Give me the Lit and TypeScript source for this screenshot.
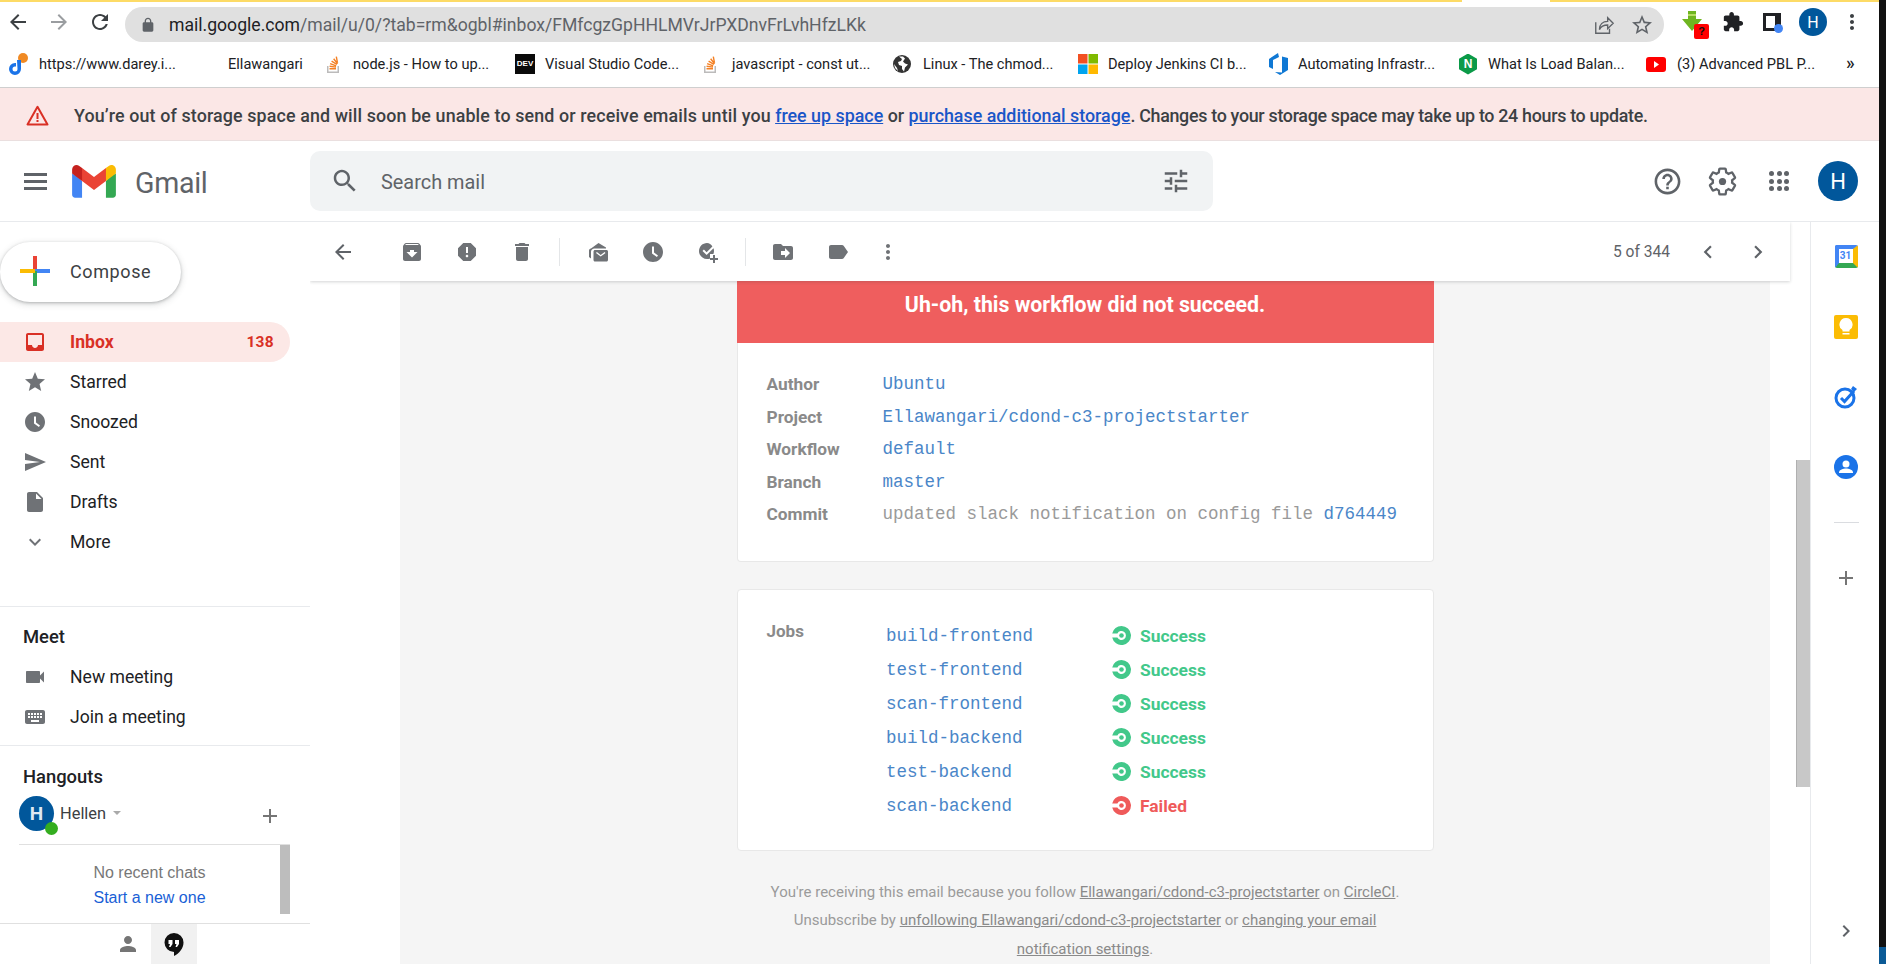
import { LitElement, html, css } from "lit";
import { customElement } from "lit/decorators.js";

const P = {
  archive: "M20.54 5.23l-1.39-1.68C18.88 3.21 18.47 3 18 3H6c-.47 0-.88.21-1.16.55L3.46 5.23C3.17 5.57 3 6.02 3 6.5V19c0 1.1.9 2 2 2h14c1.1 0 2-.9 2-2V6.5c0-.48-.17-.93-.46-1.27zM12 17.5L6.5 12H10v-2h4v2h3.5L12 17.5zM5.12 5l.81-1h12l.94 1H5.12z",
  report: "M15.73 3H8.27L3 8.27v7.46L8.27 21h7.46L21 15.73V8.27L15.73 3zM12 17.3c-.72 0-1.3-.58-1.3-1.3 0-.72.58-1.3 1.3-1.3.72 0 1.3.58 1.3 1.3 0 .72-.58 1.3-1.3 1.3zm1-4.3h-2V7h2v6z",
  trash: "M6 19c0 1.1.9 2 2 2h8c1.1 0 2-.9 2-2V7H6v12zM19 4h-3.5l-1-1h-5l-1 1H5v2h14V4z",
  unread: "M5 8.6L12.5 3 20 7.4 20 8.4H8.5C6.6 8.4 5 9.9 5 11.8V18.5L3 17V10.4C3 9.6 3.8 9 5 8.6zM9 10h11.5c.8 0 1.5.7 1.5 1.5V20c0 .8-.7 1.5-1.5 1.5H9c-.8 0-1.5-.7-1.5-1.5v-8.5C7.5 10.7 8.2 10 9 10zm1 3l4.7 3.6L19.5 13l-.9-1-3.9 2.9L10.9 12z",
  clock: "M12 2C6.5 2 2 6.5 2 12s4.5 10 10 10 10-4.5 10-10S17.5 2 12 2zm3.9 15.1L11 13.5V6.5h2v6l4 2.9z",
  task: "M11 3C6.6 3 3 6.6 3 11s3.6 8 8 8c1.1 0 2.1-.2 3-.6V14h3.4c.4-.9.6-1.9.6-3 0-1-.2-2-.5-2.8l-6.9 6.9-4.1-4.1 1.4-1.4 2.7 2.7 5.8-5.8C15.2 4.2 13.2 3 11 3zM17 15v3h-3v2h3v3h2v-3h3v-2h-3v-3z",
  move: "M20 6h-8l-2-2H4c-1.1 0-1.99.9-1.99 2L2 18c0 1.1.9 2 2 2h16c1.1 0 2-.9 2-2V8c0-1.1-.9-2-2-2zm-6 12v-3h-4v-4h4V8l5 5-5 5z",
  label: "M17.63 5.84C17.27 5.33 16.67 5 16 5L5 5.01C3.9 5.01 3 5.9 3 7v10c0 1.1.9 1.99 2 1.99L16 19c.67 0 1.27-.33 1.63-.84L22 12l-4.37-6.16z",
  more: "M12 8c1.1 0 2-.9 2-2s-.9-2-2-2-2 .9-2 2 .9 2 2 2zm0 2c-1.1 0-2 .9-2 2s.9 2 2 2 2-.9 2-2-.9-2-2-2zm0 6c-1.1 0-2 .9-2 2s.9 2 2 2 2-.9 2-2-.9-2-2-2z",
  back: "M20 11H7.83l5.59-5.59L12 4l-8 8 8 8 1.41-1.41L7.83 13H20v-2z",
  forward: "M4 13h12.17l-5.59 5.59L12 20l8-8-8-8-1.41 1.41L16.17 11H4v2z",
  reload: "M17.65 6.35C16.2 4.9 14.21 4 12 4c-4.42 0-7.99 3.58-7.99 8s3.57 8 7.99 8c3.73 0 6.84-2.55 7.73-6h-2.08c-.82 2.33-3.04 4-5.65 4-3.31 0-6-2.69-6-6s2.69-6 6-6c1.66 0 3.14.69 4.22 1.78L13 11h7V4l-2.35 2.35z",
  lock: "M18 8h-1V6c0-2.76-2.24-5-5-5S7 3.24 7 6v2H6c-1.1 0-2 .9-2 2v10c0 1.1.9 2 2 2h12c1.1 0 2-.9 2-2V10c0-1.1-.9-2-2-2zM9 6c0-1.66 1.34-3 3-3s3 1.34 3 3v2H9V6z",
  star: "M12 17.27L18.18 21l-1.64-7.03L22 9.24l-7.19-.61L12 2 9.19 8.63 2 9.24l5.46 4.73L5.82 21z",
  starLine: "M22 9.24l-7.19-.62L12 2 9.19 8.63 2 9.24l5.46 4.73L5.82 21 12 17.27 18.18 21l-1.63-7.03L22 9.24zM12 15.4l-3.76 2.27 1-4.28-3.32-2.88 4.38-.38L12 6.1l1.71 4.04 4.38.38-3.32 2.88 1 4.28L12 15.4z",
  puzzle: "M20.5 11H19V7c0-1.1-.9-2-2-2h-4V3.5C13 2.12 11.88 1 10.5 1S8 2.12 8 3.5V5H4c-1.1 0-1.99.9-1.99 2v3.8H3.5c1.49 0 2.7 1.21 2.7 2.7s-1.21 2.7-2.7 2.7H2V20c0 1.1.9 2 2 2h3.8v-1.5c0-1.49 1.21-2.7 2.7-2.7 1.49 0 2.7 1.21 2.7 2.7V22H17c1.1 0 2-.9 2-2v-4h1.5c1.38 0 2.5-1.12 2.5-2.5S21.88 11 20.5 11z",
  help: "M11 18h2v-2h-2v2zm1-16C6.48 2 2 6.48 2 12s4.48 10 10 10 10-4.48 10-10S17.52 2 12 2zm0 18c-4.41 0-8-3.59-8-8s3.59-8 8-8 8 3.59 8 8-3.59 8-8 8zm0-14c-2.21 0-4 1.79-4 4h2c0-1.1.9-2 2-2s2 .9 2 2c0 2-3 1.75-3 5h2c0-2.25 3-2.5 3-5 0-2.21-1.79-4-4-4z",
  search: "M15.5 14h-.79l-.28-.27C15.41 12.59 16 11.11 16 9.5 16 5.91 13.09 3 9.5 3S3 5.91 3 9.5 5.91 16 9.5 16c1.61 0 3.09-.59 4.23-1.57l.27.28v.79l5 4.99L20.49 19l-4.99-5zm-6 0C7.01 14 5 11.99 5 9.5S7.01 5 9.5 5 14 7.01 14 9.5 11.99 14 9.5 14z",
  tune: "M3 17v2h6v-2H3zM3 5v2h10V5H3zm10 16v-2h8v-2h-8v-2h-2v6h2zM7 9v2H3v2h4v2h2V9H7zm14 4v-2H11v2h10zm-6-4h2V7h4V5h-4V3h-2v6z",
  inbox: "M19 3H5c-1.1 0-2 .9-2 2v14c0 1.1.9 2 2 2h14c1.1 0 2-.9 2-2V5c0-1.1-.9-2-2-2zm0 12h-4c0 1.66-1.34 3-3 3s-3-1.34-3-3H5V5h14v10z",
  send: "M2.01 21L23 12 2.01 3 2 10l15 2-15 2z",
  draft: "M6 2c-1.1 0-1.99.9-1.99 2L4 20c0 1.1.89 2 1.99 2H18c1.1 0 2-.9 2-2V8l-6-6H6zm7 7V3.5L18.5 9H13z",
  expand: "M16.59 8.59L12 13.17 7.41 8.59 6 10l6 6 6-6z",
  video: "M17 10.5V7c0-.55-.45-1-1-1H4c-.55 0-1 .45-1 1v10c0 .55.45 1 1 1h12c.55 0 1-.45 1-1v-3.5l4 4v-11l-4 4z",
  keyboard: "M20 5H4c-1.1 0-1.99.9-1.99 2L2 17c0 1.1.9 2 2 2h16c1.1 0 2-.9 2-2V7c0-1.1-.9-2-2-2zm-9 3h2v2h-2V8zm0 3h2v2h-2v-2zM8 8h2v2H8V8zm0 3h2v2H8v-2zm-1 2H5v-2h2v2zm0-3H5V8h2v2zm9 7H8v-2h8v2zm0-4h-2v-2h2v2zm0-3h-2V8h2v2zm3 3h-2v-2h2v2zm0-3h-2V8h2v2z",
  person: "M12 12c2.21 0 4-1.79 4-4s-1.79-4-4-4-4 1.79-4 4 1.79 4 4 4zm0 2c-2.67 0-8 1.34-8 4v2h16v-2c0-2.66-5.33-4-8-4z",
  left: "M15.41 7.41L14 6l-6 6 6 6 1.41-1.41L10.83 12z",
  right: "M8.59 16.59L10 18l6-6-6-6-1.41 1.41L13.17 12z",
  plus: "M19 13h-6v6h-2v-6H5v-2h6V5h2v6h6v2z",
  gear: "M19.43 12.98c.04-.32.07-.64.07-.98s-.03-.66-.07-.98l2.11-1.65c.19-.15.24-.42.12-.64l-2-3.46c-.12-.22-.39-.3-.61-.22l-2.49 1c-.52-.4-1.08-.73-1.69-.98l-.38-2.65C14.46 2.18 14.25 2 14 2h-4c-.25 0-.46.18-.49.42l-.38 2.65c-.61.25-1.17.59-1.69.98l-2.49-1c-.23-.09-.49 0-.61.22l-2 3.46c-.13.22-.07.49.12.64l2.11 1.65c-.04.32-.07.65-.07.98s.03.66.07.98l-2.11 1.65c-.19.15-.24.42-.12.64l2 3.46c.12.22.39.3.61.22l2.49-1c.52.4 1.08.73 1.69.98l.38 2.65c.03.24.24.42.49.42h4c.25 0 .46-.18.49-.42l.38-2.65c.61-.25 1.17-.59 1.69-.98l2.49 1c.23.09.49 0 .61-.22l2-3.46c.12-.22.07-.49-.12-.64l-2.11-1.65z",
};

const ico = (d: string, size: number, color: string) => html`<svg
  class="ico" width=${size} height=${size} viewBox="0 0 24 24" fill=${color}><path d=${d}></path></svg>`;

const so = html`<svg class="ico" width="16" height="20" viewBox="0 0 16 20">
  <path d="M1 12v7h12v-7h-1.500v5.500h-9V12z" fill="#bcbbbb"></path>
  <path d="M3.500 14h6.500v1.500H3.500zM3.700 11.500l6.400.9-.2 1.400-6.400-.9zM4.400 9l6 2.200-.5 1.300-6-2.200zM6 6.500l5.300 3.400-.8 1.200-5.300-3.400zM8.200 4.300l3.900 5-1.100.9-3.900-5zM11 2.500l1.200 6.200-1.400.3L9.600 2.800z" fill="#f48024"></path>
</svg>`;

const bookmarks = [
  { label: "https://www.darey.i...", width: 220, gap: 11, icon: html`<svg class="ico" width="20" height="24" viewBox="0 0 20 24">
      <circle cx="15" cy="6" r="5" fill="#f08a24"></circle>
      <path d="M9 8h4v9a6 6 0 1 1-6-6h1v3.500H7A2.500 2.500 0 1 0 9.500 17z" fill="#1a73e8"></path></svg>` },
  { label: "Ellawangari", width: 98, gap: 0, icon: null },
  { label: "node.js - How to up...", width: 189, gap: 11, icon: so },
  { label: "Visual Studio Code...", width: 188, gap: 10, icon: html`<span class="dev">DEV</span>` },
  { label: "javascript - const ut...", width: 190, gap: 13, icon: so },
  { label: "Linux - The chmod...", width: 185, gap: 12, icon: html`<svg class="ico" width="18" height="18" viewBox="0 0 18 18">
      <circle cx="9" cy="9" r="9" fill="#333"></circle>
      <path d="M6 1.500l3 2.500-1 2-3 1 1 3 3 1v3l2 2.500 1-4 3-3-3-1-2-2 2-3-2-2zM1 9l3 4 1 3-3-3z" fill="#fff"></path></svg>` },
  { label: "Deploy Jenkins CI b...", width: 191, gap: 10, icon: html`<svg class="ico" width="20" height="20" viewBox="0 0 20 20">
      <rect width="9.500" height="9.500" fill="#f25022"></rect><rect x="10.500" width="9.500" height="9.500" fill="#7fba00"></rect>
      <rect y="10.500" width="9.500" height="9.500" fill="#00a4ef"></rect><rect x="10.500" y="10.500" width="9.500" height="9.500" fill="#ffb900"></rect></svg>` },
  { label: "Automating Infrastr...", width: 190, gap: 10, icon: html`<svg class="ico" width="19" height="22" viewBox="0 0 19 22">
      <path d="M0 6l9-6 1 4-6 3v9l-4-2zM19 5v12l-8 5-5-3 7 .5V3.500z" fill="#0f78d4"></path></svg>` },
  { label: "What Is Load Balan...", width: 187, gap: 11, icon: html`<span class="ngx">N</span>` },
  { label: "(3) Advanced PBL P...", width: 199, gap: 11, icon: html`<svg class="ico" width="20" height="15" viewBox="0 0 20 15">
      <rect width="20" height="15" rx="3" fill="#f00"></rect><path d="M8 4l5 3.500-5 3.500z" fill="#fff"></path></svg>` },
];

const nav = [
  { label: "Starred", d: P.star },
  { label: "Snoozed", d: P.clock },
  { label: "Sent", d: P.send },
  { label: "Drafts", d: P.draft },
  { label: "More", d: P.expand },
];

const details = [
  ["Author", "Ubuntu"],
  ["Project", "Ellawangari/cdond-c3-projectstarter"],
  ["Workflow", "default"],
  ["Branch", "master"],
];

const jobs = [
  ["build-frontend", true],
  ["test-frontend", true],
  ["scan-frontend", true],
  ["build-backend", true],
  ["test-backend", true],
  ["scan-backend", false],
] as const;

const statusIcon = (ok: boolean) => html`<svg class="ico" width="19" height="19" viewBox="0 0 19 19">
  <path d="M9.500 0a9.500 9.500 0 1 1-9.300 11.500h5.200a4.500 4.500 0 1 0 0-4H.2A9.500 9.500 0 0 1 9.500 0z" fill=${ok ? "#42c88a" : "#ef5a5a"}></path>
  <circle cx="9.500" cy="9.500" r="2.300" fill=${ok ? "#42c88a" : "#ef5a5a"}></circle>
</svg>`;

@customElement("app-root")
export class AppRoot extends LitElement {
  static override styles = css`
    :host {
      display: flex;
      width: 1886px;
      height: 964px;
      overflow: hidden;
      font-family: Roboto, sans-serif;
      color: #202124;
      background: #fff;
    }
    .ico { display: block; flex: none; }
    .window { width: 1879px; display: flex; flex-direction: column; flex: none; }
    .strip { width: 7px; background: #111; display: flex; flex-direction: column; justify-content: flex-end; }
    .strip i { display: block; height: 17px; background: #0b5a96; }

    .loadbar { height: 2px; display: flex; flex: none; }
    .loadbar i:nth-child(1) { width: 1462px; background: #fddb66; }
    .loadbar i:nth-child(2) { width: 88px; }
    .loadbar i:nth-child(3) { flex: 1; background: #fddb66; }

    .chrome { height: 40px; display: flex; align-items: flex-start; flex: none; }
    .nav-btn { width: 41px; height: 40px; display: flex; align-items: center; justify-content: center; }
    .nav-btns { display: flex; margin-left: -3px; width: 128px; }
    .url { margin-top: 5px; width: 1539px; height: 35px; border-radius: 18px; background: #e0e0e0; display: flex; align-items: center; padding-left: 15px; box-sizing: border-box; }
    .url b { font-weight: 400; font-size: 17.6px; color: #5f6368; margin-left: 13px; flex: 1; white-space: nowrap; }
    .url b span { color: #202124; }
    .url .share { margin-right: 15px; }
    .url .fav { margin-right: 10px; }
    .exts { position: relative; display: flex; align-items: center; height: 40px; padding-left: 18px; }
    .dl { width: 20px; height: 22px; position: relative; margin-right: 20px; }
    .badge { position: absolute; left: 12px; top: 13px; width: 15px; height: 15px; background: #f00; border-radius: 2px; color: #111; font: 700 11px/15px "Liberation Sans", sans-serif; text-align: center; }
    .panel { width: 18px; height: 18px; margin: 0 18px 0 19px; box-sizing: border-box; border: 3px solid #202124; position: relative; background: linear-gradient(90deg, #fff 9px, #202124 9px); }
    .panel i { position: absolute; right: -5px; bottom: -5px; width: 9px; height: 9px; border-radius: 50%; background: #4285f4; }
    .mini { width: 28px; height: 28px; border-radius: 50%; background: #01579b; color: #fff; font-size: 16px; display: flex; align-items: center; justify-content: center; margin-right: 13px; }

    .bookmarks { height: 46px; flex: none; display: flex; align-items: center; padding: 0 0 1px 8px; box-sizing: border-box; border-bottom: 1px solid #cfcfcf; font-size: 14.6px; }
    .bm { display: flex; align-items: center; flex: none; white-space: nowrap; }
    .dev { width: 20px; height: 20px; background: #0a0a0a; color: #fff; font: 700 8px/20px "Liberation Sans", sans-serif; text-align: center; flex: none; }
    .ngx { width: 18px; height: 21px; background: #0b9a48; color: #fff; font: 700 12px/21px "Liberation Sans", sans-serif; text-align: center; flex: none; clip-path: polygon(50% 0, 100% 25%, 100% 75%, 50% 100%, 0 75%, 0 25%); }
    .chev2 { font-size: 18px; font-weight: 500; margin-left: 1px; margin-top: -3px; }

    .banner { height: 53px; flex: none; box-sizing: border-box; padding: 2px 0 0 26px; background: #fbe7e6; border-bottom: 1px solid #eadfdf; display: flex; align-items: center; font-size: 17.85px; font-weight: 500; color: #3c4043; white-space: nowrap; }
    .banner svg { margin-right: 25px; }
    .banner a { color: #1a56c8; text-decoration: underline; }
    .banner .lead { letter-spacing: .13px; }
    .banner .tail { letter-spacing: -.3px; }

    .header { height: 81px; flex: none; box-sizing: border-box; border-bottom: 1px solid #e8eaed; display: flex; align-items: center; }
    .burger { width: 23px; margin-left: 24px; display: flex; flex-direction: column; gap: 4px; }
    .burger i { height: 3px; background: #5f6368; display: block; }
    .logo { margin-left: 25px; }
    .word { margin-left: 19px; width: 175px; padding-top: 3px; font-size: 28.6px; color: #5f6368; letter-spacing: -0.3px; }
    .search { width: 903px; height: 60px; background: #f1f3f4; border-radius: 10px; display: flex; align-items: center; padding: 0 22px 0 20px; box-sizing: border-box; }
    .search span { flex: 1; margin-left: 21px; padding-top: 3px; font-size: 19.9px; color: #5f6368; }
    .hright { display: flex; align-items: center; margin-left: 439px; }
    .avatar { width: 40px; height: 40px; border-radius: 50%; background: #01579b; color: #fff; font-size: 22px; display: flex; align-items: center; justify-content: center; margin-left: 29px; }
    .gear { margin-left: 24px; }
    .apps { width: 20px; height: 20px; margin-left: 31px; display: grid; grid-template-columns: repeat(3, 5px); gap: 2.5px; }
    .apps i { width: 5px; height: 5px; border-radius: 50%; background: #5f6368; }

    .body { flex: 1; min-height: 0; display: flex; }
    .side { width: 310px; flex: none; display: flex; flex-direction: column; font-size: 17.6px; }
    .compose { margin-top: 20px; width: 181px; height: 60px; flex: none; box-sizing: border-box; padding: 0 0 2px 20px; border-radius: 30px; background: #fff; box-shadow: 0 1px 3px rgba(60,64,67,.3), 0 2px 6px 1px rgba(60,64,67,.15); display: flex; align-items: center; gap: 20px; font-size: 18px; letter-spacing: .6px; color: #3c4043; }
    .rows { margin-top: 20px; }
    .row { height: 40px; width: 290px; display: flex; align-items: center; padding-left: 23px; box-sizing: border-box; color: #202124; }
    .row .ico { margin-right: 23px; }
    .row.on { background: #fce8e6; border-radius: 0 20px 20px 0; color: #d93025; font-weight: 700; padding-right: 16px; }
    .row.on em { margin-left: auto; font-style: normal; font-size: 15.5px; letter-spacing: .3px; }
    .sec { border-top: 1px solid #e8eaed; margin-top: 44px; padding-bottom: 8px; }
    .sec h4 { margin: 0; height: 50px; padding: 8px 0 0 23px; box-sizing: border-box; display: flex; align-items: center; font-weight: 500; font-size: 18.4px; color: #202124; }
    .hang { border-top: 1px solid #e8eaed; padding-top: 10px; }
    .hang h4 { margin: 0; height: 40px; padding-left: 23px; display: flex; align-items: center; font-weight: 500; font-size: 18.4px; }
    .user { height: 49px; margin-left: 19px; width: 271px; display: flex; align-items: flex-start; box-sizing: border-box; border-bottom: 1px solid #e0e0e0; }
    .uav { position: relative; width: 35px; height: 35px; border-radius: 50%; background: #01579b; color: #dfe9f2; font-weight: 700; font-size: 19px; display: flex; align-items: center; justify-content: center; flex: none; }
    .uav i { position: absolute; right: -4px; bottom: -4px; width: 13px; height: 13px; border-radius: 50%; background: #34ad1f; }
    .uname { margin: 8px 0 0 6px; color: #3c4043; font-size: 16.4px; }
    .caret { margin: 15px 0 0 7px; width: 0; height: 0; border: 4px solid transparent; border-top: 4px solid #aaa; }
    .uadd { margin: 8px 0 0 auto; padding-right: 8px; }
    .chats { height: 78px; flex: none; margin-left: 19px; width: 271px; display: flex; }
    .chatmsg { flex: 1; display: flex; flex-direction: column; align-items: center; padding-top: 15px; font: 16px/25px "Liberation Sans", sans-serif; color: #777; }
    .chatmsg a { color: #1a5fd6; }
    .chatbar { width: 10px; height: 69px; background: #bdbdbd; }
    .tabs { flex: 1; border-top: 1px solid #e0e0e0; display: flex; padding-left: 105px; }
    .tab { width: 46px; display: flex; align-items: center; justify-content: center; }
    .tab.on { background: #f1f1f1; }

    .main { position: relative; flex: 1; min-width: 0; display: flex; flex-direction: column; overflow: hidden; }
    .tools { position: relative; z-index: 1; height: 59px; flex: none; margin-right: 20px; background: #fff; box-shadow: 0 1px 3px rgba(60,64,67,.22); display: flex; align-items: center; padding-left: 5px; box-sizing: border-box; }
    .tb { width: 55px; height: 40px; display: flex; align-items: center; justify-content: center; flex: none; }
    .tb.first { margin-right: 14.5px; }
    .tb.last { width: 45px; }
    .sep { width: 1px; height: 28px; background: #e4e6e8; margin: 0 10px 0 9.5px; flex: none; }
    .pager { margin-left: auto; display: flex; align-items: center; font-size: 15.6px; color: #5f6368; padding-right: 19px; }
    .pager span { margin-right: 25px; }
    .pager .ico + .ico { margin-left: 24px; }
    .msg { flex: 1; margin: 0 40px 0 90px; background: #f5f5f5; display: flex; flex-direction: column; align-items: center; }
    .card { width: 697px; box-sizing: border-box; background: #fff; border: 1px solid #e8e8e8; border-radius: 4px; }
    .card.one { border-top: 0; border-radius: 0 0 4px 4px; height: 281px; }
    .red { height: 62px; margin: 0 -1px; box-sizing: border-box; padding-bottom: 16px; background: #ef5e5e; color: #fff; font-weight: 700; font-size: 21.3px; display: flex; align-items: center; justify-content: center; }
    .dl-list { padding: 25px 0 0 29px; }
    .dr { height: 32.5px; display: flex; align-items: center; }
    .dt { width: 116px; font-weight: 700; font-size: 17.3px; color: #8a8a8a; flex: none; }
    .dd { font: 17.5px "Liberation Mono", monospace; color: #4a86c8; white-space: nowrap; }
    .dd.gray { color: #9a9a9a; }
    .dd.gray span { color: #4a86c8; }
    .card.two { margin-top: 26.5px; height: 262.5px; display: flex; padding: 29px 0 0 29px; }
    .jl { width: 119.5px; font-weight: 700; font-size: 17px; color: #8a8a8a; height: 24px; line-height: 24px; }
    .jr { height: 34px; display: flex; align-items: center; }
    .jn { width: 226px; font: 17.5px "Liberation Mono", monospace; color: #4a86c8; }
    .js { margin-left: 9px; font-weight: 700; font-size: 17.4px; color: #42c88a; }
    .js.bad { color: #ef5a5a; }
    .foot { margin-top: 27px; width: 640px; text-align: center; color: #9b9b9b; font-size: 15px; line-height: 28.3px; }
    .foot a { color: #8a8a8a; text-decoration: underline; }
    .scroll { position: absolute; left: 1486px; top: 238px; width: 14px; height: 327px; background: #c8c8c8; box-shadow: inset 1px 0 #b0b0b0; }

    .rail { width: 69px; flex: none; border-left: 1px solid #e8eaed; box-sizing: border-box; display: flex; flex-direction: column; align-items: center; padding-top: 23px; }
    .rail > * { flex: none; margin-left: 2px; }
    .cal { width: 23px; height: 23px; background: #fff; border: solid #4285f4; border-width: 4px 5px 5px 4px; border-right-color: #fbbc04; border-bottom-color: #34a853; border-radius: 2px; box-sizing: border-box; color: #4285f4; font: 700 10px/14px Roboto, sans-serif; text-align: center; }
    .keep { margin-top: 47px; width: 24px; height: 24px; background: #fbbc04; border-radius: 2px; display: flex; align-items: center; justify-content: center; }
    .tasks, .contacts { margin-top: 46px; }
    .rule { width: 25px; height: 1px; background: #dadce0; margin-top: 43px; }
    .railadd { margin-top: 43px; }
    .railnext { margin-top: 329px; }
  `;

  override render() {
    return html`
      <div class="window">
        <div class="loadbar"><i></i><i></i><i></i></div>
        ${this.renderChrome()}
        <div class="bookmarks">
          ${bookmarks.map(
            (b) => html`<div class="bm" style="width:${b.width}px;gap:${b.gap}px">${b.icon}<span>${b.label}</span></div>`
          )}
          <span class="chev2">»</span>
        </div>
        <div class="banner">
          <svg class="ico" width="23" height="21" viewBox="0 0 23 21" fill="none">
            <path d="M11.500 1.800L1.500 19.500h20z" stroke="#d93025" stroke-width="2" stroke-linejoin="round"></path>
            <path d="M10.500 8h2v6h-2zM10.500 15h2v2h-2z" fill="#d93025"></path>
          </svg>
          <span><span class="lead">You’re out of storage space and will soon be unable to send or receive emails until you</span> <a>free up space</a> or <a>purchase additional storage</a><span class="tail">. Changes to your storage space may take up to 24 hours to update.</span></span>
        </div>
        ${this.renderHeader()}
        <div class="body">
          ${this.renderSide()} ${this.renderMain()} ${this.renderRail()}
        </div>
      </div>
      <div class="strip"><i></i></div>
    `;
  }

  private renderChrome() {
    return html`<div class="chrome">
      <div class="nav-btns">
        <div class="nav-btn">${ico(P.back, 24, "#3c4043")}</div>
        <div class="nav-btn">${ico(P.forward, 24, "#9a9da0")}</div>
        <div class="nav-btn">${ico(P.reload, 24, "#3c4043")}</div>
      </div>
      <div class="url">
        ${ico(P.lock, 16, "#5f6368")}
        <b><span>mail.google.com</span>/mail/u/0/?tab=rm&ogbl#inbox/FMfcgzGpHHLMVrJrPXDnvFrLvhHfzLKk</b>
        <span class="share"><svg class="ico" width="22" height="22" viewBox="0 0 24 24" fill="none" stroke="#5f6368" stroke-width="1.500"><path d="M3 9v12h15v-5"></path><path d="M7 17c0-6 4-9 9-9V4l6 6-6 6v-4c-4 0-7 1-9 5z"></path></svg></span>
        <span class="fav">${ico(P.starLine, 24, "#5f6368")}</span>
      </div>
      <div class="exts">
        <div class="dl">
          <svg class="ico" width="20" height="22" viewBox="0 0 20 22"><path d="M6 0h8v8h6L10 20 0 8h6z" fill="#6fb520"></path><path d="M6 3h8v2H6z" fill="#b6dd62"></path></svg>
          <span class="badge">?</span>
        </div>
        ${ico(P.puzzle, 22, "#202124")}
        <div class="panel"><i></i></div>
        <div class="mini">H</div>
        ${ico(P.more, 24, "#3c4043")}
      </div>
    </div>`;
  }

  private renderHeader() {
    return html`<div class="header">
      <div class="burger"><i></i><i></i><i></i></div>
      <svg class="logo ico" width="44" height="33" viewBox="0 0 256 193">
        <path d="M58.180 192.050V93.140L27.500 65.080 0 49.500v125.090c0 9.660 7.830 17.460 17.450 17.460h40.730z" fill="#4285F4"></path>
        <path d="M197.820 192.050h40.730c9.660 0 17.450-7.830 17.450-17.460V49.500l-31.350 15.270-26.830 28.370v98.910z" fill="#34A853"></path>
        <path d="M58.180 93.140L53.980 54.500l4.200-37L128 69.860l69.820-52.360 4.670 35.010-4.670 40.630L128 145.500z" fill="#EA4335"></path>
        <path d="M197.820 17.500v75.640L256 49.500V26.230c0-21.580-24.640-33.890-41.890-20.940z" fill="#FBBC04"></path>
        <path d="M0 49.500l26.760 20.070 31.420 23.570V17.500L41.890 5.290C24.610-7.660 0 4.650 0 26.230z" fill="#C5221F"></path>
      </svg>
      <div class="word">Gmail</div>
      <div class="search">
        ${ico(P.search, 30, "#5f6368")}
        <span>Search mail</span>
        ${ico(P.tune, 30, "#5f6368")}
      </div>
      <div class="hright">
        ${ico(P.help, 31, "#5f6368")}
        <svg class="ico gear" width="31" height="31" viewBox="0 0 24 24" fill="none" stroke="#5f6368" stroke-width="1.800"><path d=${P.gear}></path><circle cx="12" cy="12" r="2.800" fill="#5f6368" stroke="none"></circle></svg>
        <div class="apps">${[...Array(9)].map(() => html`<i></i>`)}</div>
        <div class="avatar">H</div>
      </div>
    </div>`;
  }

  private renderSide() {
    return html`<div class="side">
      <div class="compose">
        <svg class="ico" width="30" height="30" viewBox="0 0 30 30">
          <rect x="13" y="0" width="4" height="15" fill="#ea4335"></rect>
          <rect x="15" y="13" width="15" height="4" fill="#4285f4"></rect>
          <rect x="13" y="15" width="4" height="15" fill="#34a853"></rect>
          <rect x="0" y="13" width="15" height="4" fill="#fbbc04"></rect>
        </svg>
        Compose
      </div>
      <div class="rows">
        <div class="row on">${ico(P.inbox, 24, "#d93025")}Inbox<em>138</em></div>
        ${nav.map((n) => html`<div class="row">${ico(n.d, 24, "#6f7276")}${n.label}</div>`)}
      </div>
      <div class="sec">
        <h4>Meet</h4>
        <div class="row">${ico(P.video, 24, "#6f7276")}New meeting</div>
        <div class="row">${ico(P.keyboard, 24, "#6f7276")}Join a meeting</div>
      </div>
      <div class="hang">
        <h4>Hangouts</h4>
        <div class="user">
          <div class="uav">H<i></i></div>
          <span class="uname">Hellen</span>
          <span class="caret"></span>
          <span class="uadd">${ico(P.plus, 24, "#757575")}</span>
        </div>
        <div class="chats">
          <div class="chatmsg"><span>No recent chats</span><a>Start a new one</a></div>
          <div class="chatbar"></div>
        </div>
      </div>
      <div class="tabs">
        <div class="tab">${ico(P.person, 24, "#757575")}</div>
        <div class="tab on">
          <svg class="ico" width="20" height="23" viewBox="0 0 20 23"><path d="M10 0a9.500 9.500 0 0 0 0 19v4c5-2.500 9.500-7.500 9.500-13.500A9.500 9.500 0 0 0 10 0z" fill="#111"></path><path d="M4.500 7h4v4l-2 3h-1.500l1-3h-1.500zM11 7h4v4l-2 3h-1.500l1-3H11z" fill="#fff"></path></svg>
        </div>
      </div>
    </div>`;
  }

  private renderMain() {
    return html`<div class="main">
      <div class="tools">
        <div class="tb first">${ico(P.back, 24, "#5f6368")}</div>
        <div class="tb">${ico(P.archive, 24, "#6f7276")}</div>
        <div class="tb">${ico(P.report, 24, "#6f7276")}</div>
        <div class="tb">${ico(P.trash, 24, "#6f7276")}</div>
        <div class="sep"></div>
        <div class="tb">${ico(P.unread, 24, "#6f7276")}</div>
        <div class="tb">${ico(P.clock, 24, "#6f7276")}</div>
        <div class="tb">${ico(P.task, 24, "#6f7276")}</div>
        <div class="sep"></div>
        <div class="tb">${ico(P.move, 24, "#6f7276")}</div>
        <div class="tb">${ico(P.label, 24, "#6f7276")}</div>
        <div class="tb last">${ico(P.more, 24, "#6f7276")}</div>
        <div class="pager">
          <span>5 of 344</span>
          ${ico(P.left, 26, "#5f6368")} ${ico(P.right, 26, "#5f6368")}
        </div>
      </div>
      <div class="msg">
        <div class="card one">
          <div class="red">Uh-oh, this workflow did not succeed.</div>
          <div class="dl-list">
            ${details.map(
              ([k, v]) => html`<div class="dr"><div class="dt">${k}</div><div class="dd">${v}</div></div>`
            )}
            <div class="dr">
              <div class="dt">Commit</div>
              <div class="dd gray">updated slack notification on config file <span>d764449</span></div>
            </div>
          </div>
        </div>
        <div class="card two">
          <div class="jl">Jobs</div>
          <div>
            ${jobs.map(
              ([name, ok]) => html`<div class="jr">
                <div class="jn">${name}</div>
                ${statusIcon(ok)}
                <div class="js ${ok ? "" : "bad"}">${ok ? "Success" : "Failed"}</div>
              </div>`
            )}
          </div>
        </div>
        <div class="foot">
          You're receiving this email because you follow <a>Ellawangari/cdond-c3-projectstarter</a> on <a>CircleCI</a>.
          Unsubscribe by <a>unfollowing Ellawangari/cdond-c3-projectstarter</a> or <a>changing your email notification settings</a>.
        </div>
      </div>
      <div class="scroll"></div>
    </div>`;
  }

  private renderRail() {
    return html`<div class="rail">
      <div class="cal">31</div>
      <div class="keep">
        <svg class="ico" width="14" height="18" viewBox="0 0 14 18"><path d="M7 0a6.500 6.500 0 0 0-3.500 12v1.500h7V12A6.500 6.500 0 0 0 7 0zM3.500 15h7v1.500h-7z" fill="#fff"></path></svg>
      </div>
      <svg class="ico tasks" width="24" height="24" viewBox="0 0 24 24" fill="none">
        <circle cx="11" cy="13" r="9" stroke="#1a73e8" stroke-width="3"></circle>
        <path d="M7 13l3.500 3.500L20 6" stroke="#1a73e8" stroke-width="3"></path>
        <path d="M19 1l4 3-3 3-3-3z" fill="#1a73e8"></path>
      </svg>
      <svg class="ico contacts" width="24" height="24" viewBox="0 0 24 24">
        <circle cx="12" cy="12" r="12" fill="#1a73e8"></circle>
        <circle cx="12" cy="9" r="3.500" fill="#fff"></circle>
        <path d="M5 17.500c0-3 4.500-4 7-4s7 1 7 4V18H5z" fill="#fff"></path>
      </svg>
      <div class="rule"></div>
      <div class="railadd">${ico(P.plus, 24, "#757575")}</div>
      <div class="railnext">${ico(P.right, 24, "#5f6368")}</div>
    </div>`;
  }
}

declare global {
  interface HTMLElementTagNameMap {
    "app-root": AppRoot;
  }
}
